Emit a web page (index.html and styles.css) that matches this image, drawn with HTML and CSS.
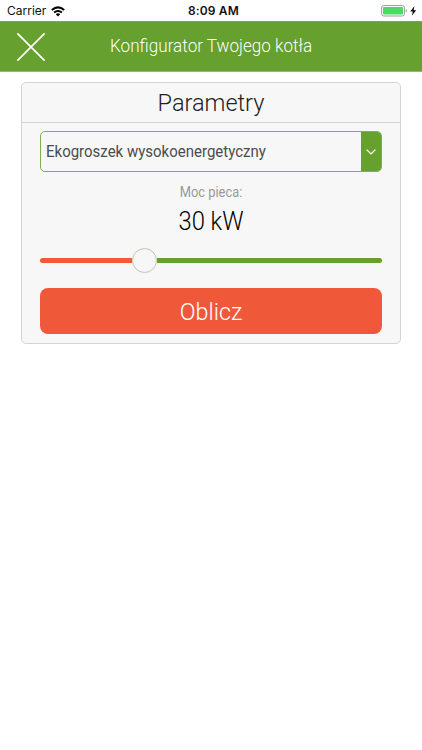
FILE: index.html
```html
<!DOCTYPE html>
<html lang="pl">
<head>
<meta charset="utf-8">
<meta name="viewport" content="width=device-width, initial-scale=1">
<title>Konfigurator Twojego kotła</title>
<link rel="stylesheet" href="styles.css">
</head>
<body>
<div class="status">
  <div class="carrier"><span>Carrier</span>
    <svg width="14" height="11" viewBox="0 0 14 11" fill="none" stroke="#000" stroke-width="2"><path d="M.8 4.1Q7-1.3 13.2 4.1M3.1 6.6Q7 3.3 10.9 6.6"/><path d="M4.8 8.2Q7 6.4 9.2 8.2L7 10.4Z" fill="#000" stroke="none"/></svg>
  </div>
  <time class="time">8:09 AM</time>
  <div class="power">
    <svg width="36" height="12" viewBox="0 0 36 12"><rect x=".6" y=".6" width="22.8" height="10.4" rx="2.2" fill="#fff" stroke="#999" stroke-width="1"/><rect x="2" y="2" width="20" height="7.6" rx="1" fill="#4cd964"/><path d="M24.8 4v3.6q1.3-.5 1.3-1.8T24.8 4Z" fill="#999"/><path d="M33.5 1L29.3 6.5h2.6L30.8 10.8 35.2 5.2h-2.7Z" fill="#000"/></svg>
  </div>
</div>
<header class="bar">
  <svg class="close" width="28" height="28" viewBox="0 0 28 28" fill="none" stroke="#fff" stroke-width="1.7" stroke-linecap="round"><path d="M.9.9L27.1 27.1M27.1.9L.9 27.1"/></svg>
  <h1 class="title">Konfigurator Twojego kotła</h1>
</header>
<main class="card">
  <h2 class="heading"><span>Parametry</span></h2>
  <div class="content">
    <div class="select"><span class="value">Ekogroszek wysokoenergetyczny</span>
      <span class="arrow"><svg width="10" height="6" viewBox="0 0 10 6" fill="none" stroke="#fff" stroke-width="1.2" stroke-linecap="round"><path d="M1 1l4 4 4-4"/></svg></span>
    </div>
    <div class="label">Moc pieca:</div>
    <div class="power-value">30 kW</div>
    <div class="slider"><div class="done"></div><div class="thumb"></div><div class="rest"></div></div>
    <button class="submit"><span class="submit-text">Oblicz</span></button>
  </div>
</main>
</body>
</html>
```
FILE: styles.css
```css
* { box-sizing: border-box; }
body { margin: 0; background: #fff; font-family: Roboto, "Liberation Sans", sans-serif; }
h1, h2 { margin: 0; font-weight: 300; }
.status { display: grid; grid-template-columns: 1fr auto 1fr; align-items: center; height: 21px; padding: 1px 5px 0 7px; font: 12px/20px Inter, sans-serif; color: #111; }
.carrier { display: flex; align-items: center; gap: 5px; letter-spacing: 0; }
.time { font-weight: 600; letter-spacing: .15px; margin-left: 3px; }
.power { display: flex; justify-content: flex-end; }
.bar { display: flex; align-items: center; height: 51px; padding: 0 17px; background: #66a02e; border-top: 1px solid #76ab45; border-bottom: 1px solid #92bb6b; }
.title { margin: 0 0 1px 65px; font-size: 17.5px; font-weight: 350; line-height: 26px; color: #fff; white-space: nowrap; transform: scaleX(.978); transform-origin: left; }
.card { width: 380px; height: 262px; margin: 10px 0 0 21px; background: #f7f7f7; border: 1px solid #d4d4d4; border-radius: 5px; }
.heading { height: 40px; border-bottom: 1px solid #d4d4d4; text-align: center; font-size: 23.5px; line-height: 40px; color: #222; }
.content { display: flex; flex-direction: column; padding: 8px 18px 0; }
.select { display: flex; height: 41px; border: 1px solid #7fb04f; border-radius: 5px; overflow: hidden; }
.value { flex: none; width: 320px; margin-right: auto; padding-left: 5.5px; font-size: 16.5px; line-height: 39px; color: #4c4c4c; white-space: nowrap; transform: scaleX(.909); transform-origin: left; }
.arrow { display: flex; flex: none; align-items: center; justify-content: center; width: 20px; background: #66a02e; }
.label { margin-top: 10px; text-align: center; font-size: 14px; line-height: 20px; color: #999; transform: scaleX(.92); }
.power-value { text-align: center; font-size: 25px; line-height: 40px; color: #000; font-weight: 300; transform: scaleX(.95); }
.slider { display: flex; align-items: center; height: 26px; margin-top: 5px; }
.done { width: 92px; height: 5px; border-radius: 3px 0 0 3px; background: #f05a3a; }
.thumb { width: 25px; height: 25px; border: 1px solid #c5c3b0; border-radius: 50%; background: #f7f7f7; }
.rest { flex: 1; height: 5px; border-radius: 0 3px 3px 0; background: #66a02e; }
.submit { height: 46px; margin-top: 15px; padding: 0; border: 0; border-radius: 8px; background: #ef593a; color: #fff; font: 300 24.5px/46px Roboto, sans-serif; }
.submit-text { display: block; padding-top: 1px; transform: scaleX(.95); }
```
